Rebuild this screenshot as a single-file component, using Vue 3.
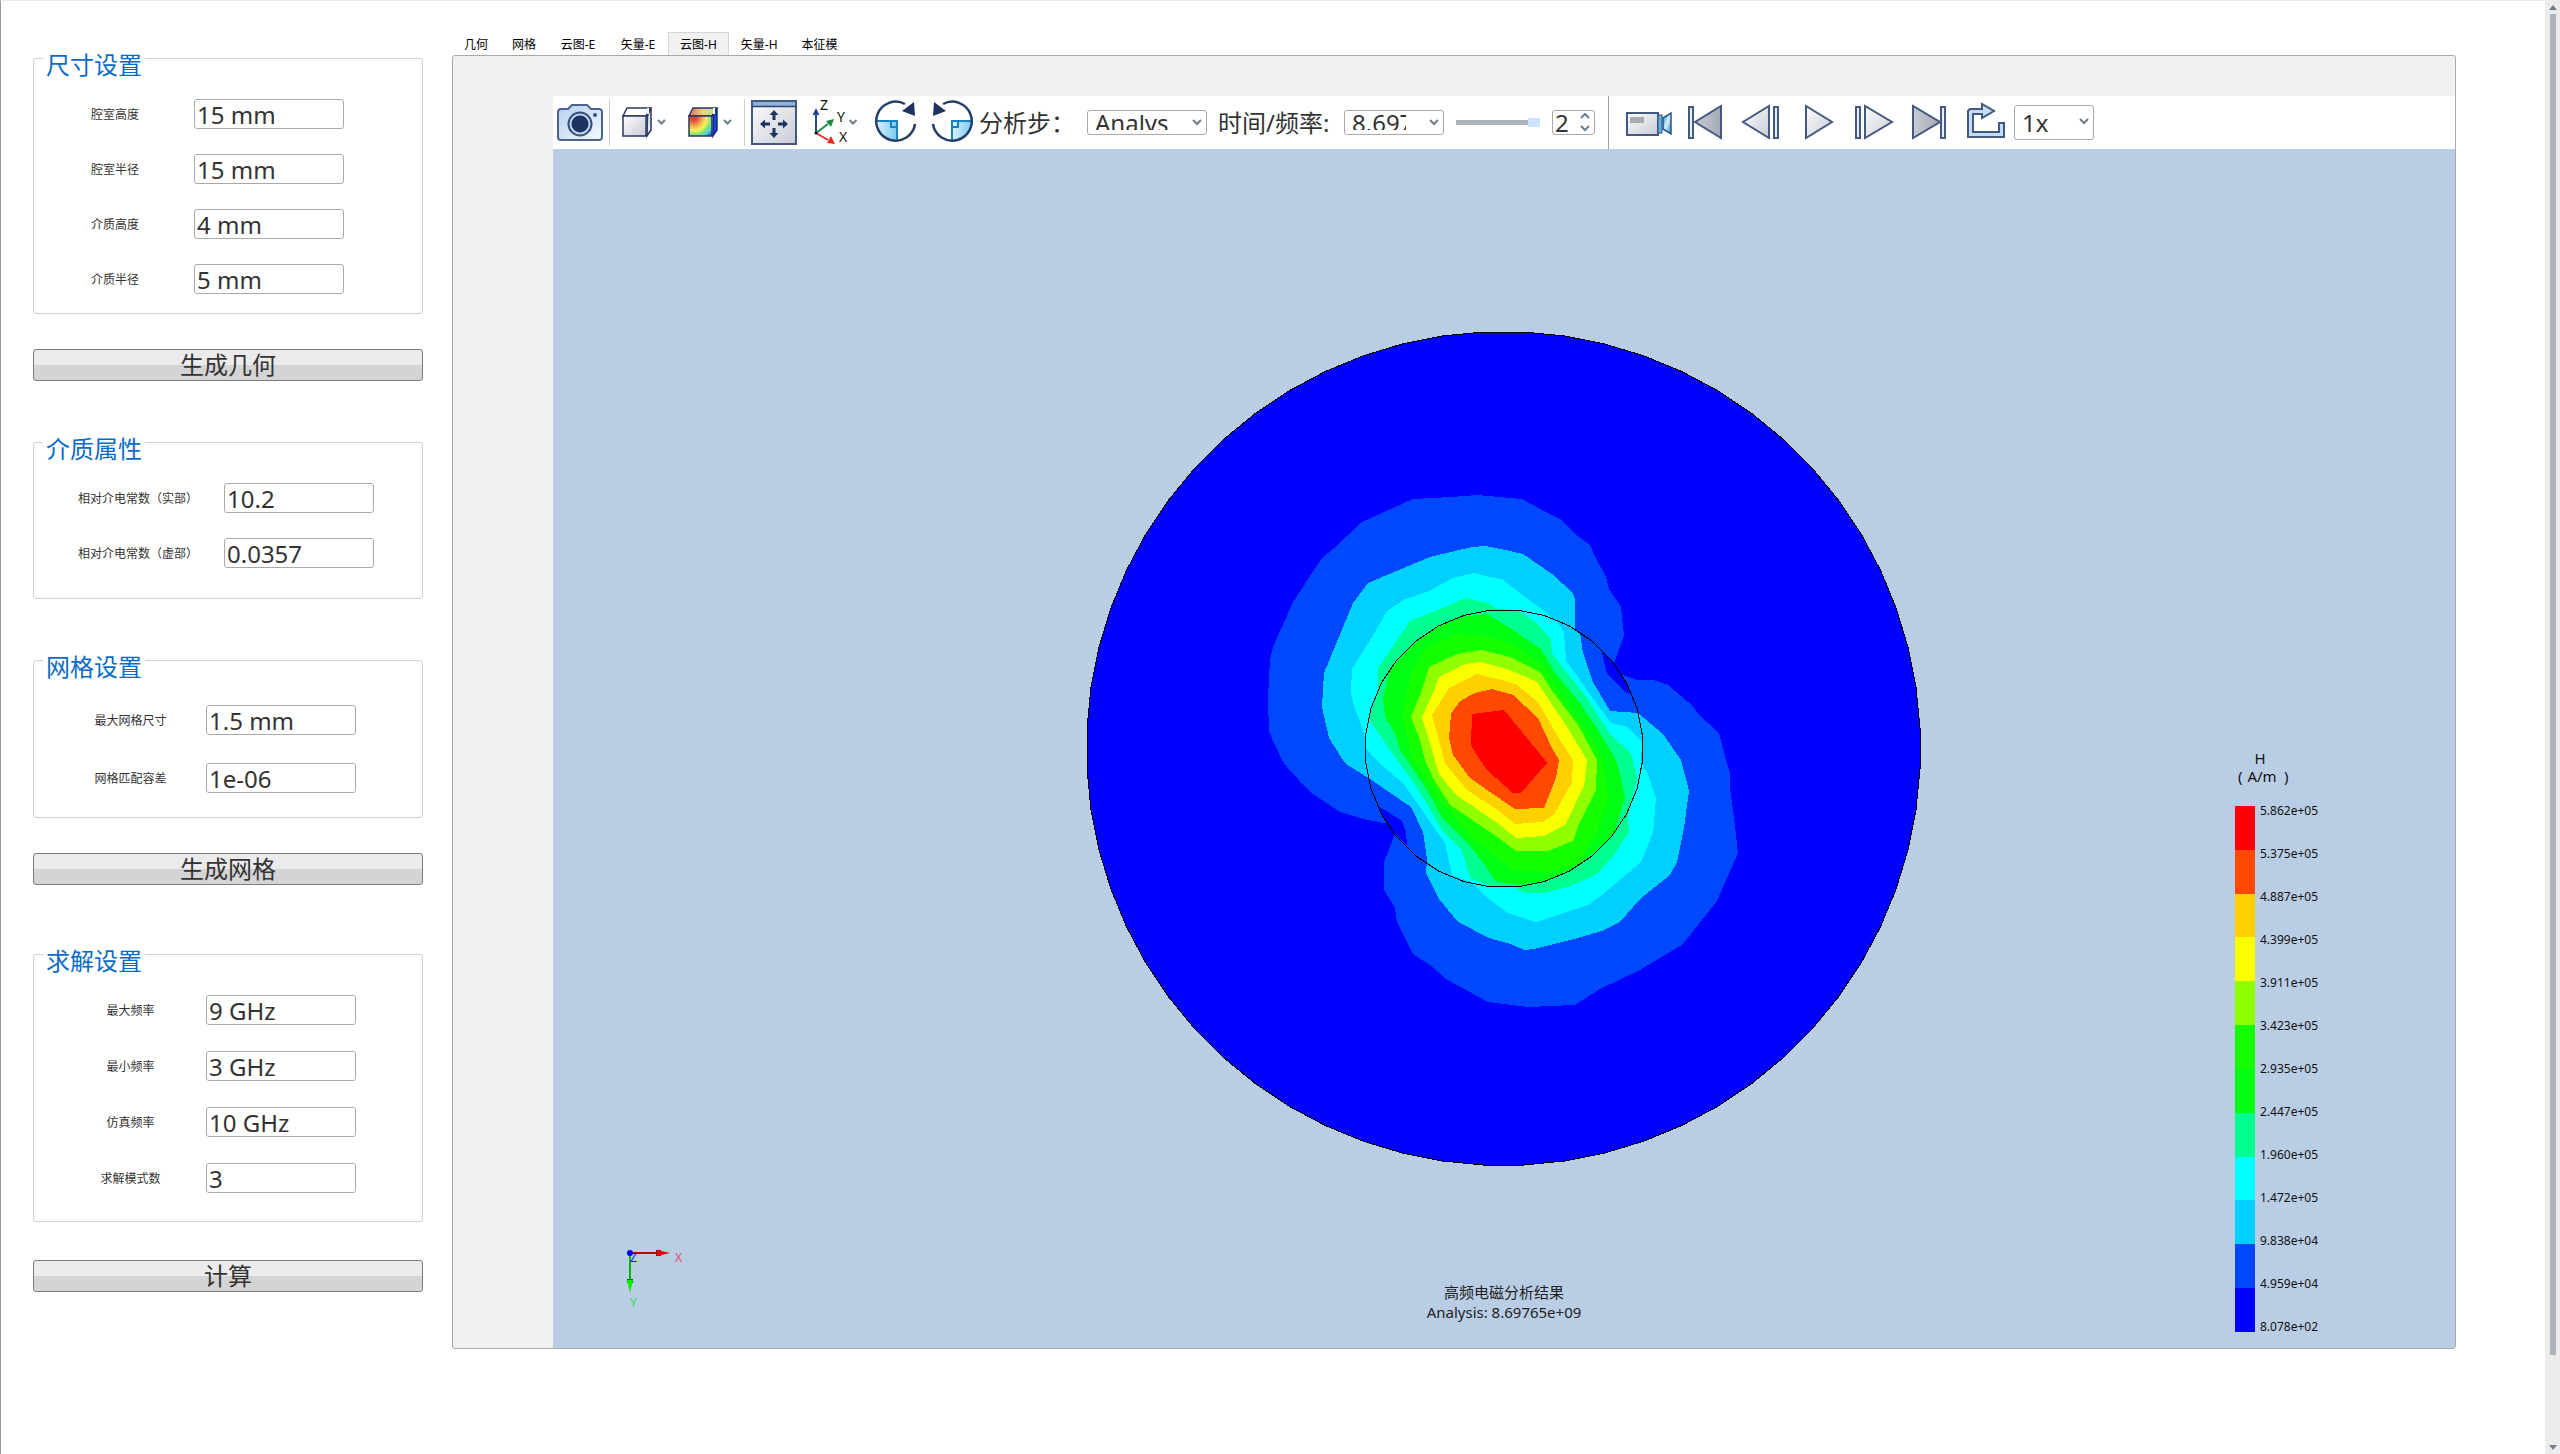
<script setup>
import { ref } from 'vue'

const groups = [
  {
    key: 'size',
    title: '尺寸设置',
    button: '生成几何',
    fields: [
      { label: '腔室高度', value: '15 mm' },
      { label: '腔室半径', value: '15 mm' },
      { label: '介质高度', value: '4 mm' },
      { label: '介质半径', value: '5 mm' },
    ],
  },
  {
    key: 'medium',
    title: '介质属性',
    fields: [
      { label: '相对介电常数（实部）', value: '10.2' },
      { label: '相对介电常数（虚部）', value: '0.0357' },
    ],
  },
  {
    key: 'mesh',
    title: '网格设置',
    button: '生成网格',
    fields: [
      { label: '最大网格尺寸', value: '1.5 mm' },
      { label: '网格匹配容差', value: '1e-06' },
    ],
  },
  {
    key: 'solve',
    title: '求解设置',
    button: '计算',
    fields: [
      { label: '最大频率', value: '9 GHz' },
      { label: '最小频率', value: '3 GHz' },
      { label: '仿真频率', value: '10 GHz' },
      { label: '求解模式数', value: '3' },
    ],
  },
]

const tabs = ['几何', '网格', '云图-E', '矢量-E', '云图-H', '矢量-H', '本征模']
const activeTab = ref('云图-H')

const ring = (cx, cy, r, n) =>
  Array.from({ length: n }, (_, i) => {
    const a = ((i + 0.5) * 2 * Math.PI) / n
    return `${(cx + r * Math.cos(a)).toFixed(1)},${(cy + r * Math.sin(a)).toFixed(1)}`
  }).join(' ')

const cavity = ring(1503.5, 748.5, 417, 64)
const dielectric = ring(1504, 748.5, 139, 32)

/* Iso-bands of |H|, weakest first */
const bands = [
  { color: '#0048ff', points: '1413,499 1452,497 1477,495 1510,498 1522,499 1544,511 1560,519 1575,534 1590,545 1596,558 1606,577 1609,589 1621,607 1624,636 1614,663 1601,649 1607,674 1627,693 1631,693 1622,675 1637,680 1653,680 1668,685 1694,707 1697,713 1719,733 1726,760 1730,773 1730,788 1734,817 1738,853 1717,901 1683,944 1640,970 1600,989 1575,1005 1528,1007 1488,1002 1446,979 1430,965 1413,954 1397,922 1395,908 1384,890 1384,862 1395,834 1407,846 1406,832 1402,821 1377,805 1388,824 1364,819 1340,812 1310,792 1287,767 1282,760 1269,732 1268,698 1270,660 1273,647 1293,602 1322,558 1333,549 1362,522' },
  { color: '#00d0ff', points: '1368,583 1430,557 1472,547 1485,546 1510,551 1523,554 1552,574 1573,593 1575,600 1575,629 1580,633 1583,653 1593,682 1610,711 1638,713 1663,734 1681,760 1689,791 1684,828 1677,862 1670,875 1640,899 1620,922 1602,931 1574,939 1534,949 1524,950 1511,944 1489,938 1458,922 1439,899 1426,873 1427,859 1423,832 1411,807 1370,779 1346,764 1343,760 1329,738 1322,707 1324,673 1353,603' },
  { color: '#00ffff', points: '1387,611 1405,599 1427,592 1453,578 1474,573 1503,580 1525,597 1543,610 1549,616 1557,622 1564,632 1566,661 1578,677 1592,697 1611,723 1628,727 1642,742 1641,763 1648,774 1656,799 1653,832 1641,862 1602,895 1588,905 1536,922 1508,913 1485,896 1473,883 1452,875 1445,843 1433,826 1404,784 1376,760 1366,748 1364,733 1353,703 1351,692 1352,669 1372,637' },
  { color: '#00ff90', points: '1410,621 1445,607 1465,598 1488,603 1497,609 1517,610 1537,623 1551,639 1552,653 1567,673 1587,698 1610,734 1631,753 1637,778 1628,815 1629,832 1614,855 1597,874 1571,886 1545,893 1525,893 1513,886 1488,885 1470,878 1462,851 1442,830 1416,786 1397,760 1368,718 1378,693 1378,668' },
  { color: '#00ff12', points: '1390,670 1410,647 1433,629 1460,617 1487,614 1510,628 1542,650 1553,670 1580,703 1600,733 1616,760 1620,774 1625,797 1614,834 1579,866 1545,882 1519,885 1496,882 1482,861 1468,843 1442,818 1427,790 1407,760 1400,750 1395,733 1385,717 1383,698' },
  { color: '#14ff00', points: '1412,670 1427,647 1457,634 1487,636 1510,643 1542,663 1567,703 1593,740 1603,760 1605,778 1608,797 1597,832 1577,864 1548,872 1513,870 1473,839 1439,799 1413,759 1401,717' },
  { color: '#90ff00', points: '1429,667 1457,654 1482,650 1510,657 1520,662 1540,672 1553,692 1578,725 1597,760 1596,790 1579,824 1573,841 1548,851 1516,851 1496,836 1450,805 1433,778 1425,760 1420,740 1411,717 1422,690' },
  { color: '#faff00', points: '1439,677 1465,664 1481,662 1510,670 1537,682 1567,727 1587,760 1584,786 1565,825 1544,836 1516,838 1496,822 1456,795 1439,774 1435,760 1422,717 1433,693' },
  { color: '#ffd000', points: '1449,688 1477,674 1510,682 1517,685 1538,702 1560,740 1573,760 1572,782 1554,815 1542,822 1515,824 1499,811 1467,790 1445,763 1432,715' },
  { color: '#ff4800', points: '1451,714 1460,701 1475,693 1492,689 1510,694 1513,695 1538,718 1552,748 1559,760 1556,778 1544,808 1515,809 1490,792 1470,778 1453,755 1449,738' },
  { color: '#ff0000', points: '1472,714 1504,710 1545,760 1547,763 1521,793 1513,793 1488,771 1480,760 1471,745' },
]

const scaleColors = ['#ff0000', '#ff4800', '#ffd000', '#faff00', '#90ff00', '#14ff00', '#00ff12', '#00ff90', '#00ffff', '#00d0ff', '#0048ff', '#0000ff']
const scaleLabels = ['5.862e+05', '5.375e+05', '4.887e+05', '4.399e+05', '3.911e+05', '3.423e+05', '2.935e+05', '2.447e+05', '1.960e+05', '1.472e+05', '9.838e+04', '4.959e+04', '8.078e+02']

const playback = [
  { name: '第一帧', bar: 10, tri: '43,10 43,42 17,26', fill: 'url(#steel)' },
  { name: '上一帧', bar: 39, tri: '35,10 35,42 9,26', fill: 'url(#silver)' },
  { name: '播放', bar: null, tri: '16,10 16,42 42,26', fill: 'url(#silver)' },
  { name: '下一帧', bar: 9, tri: '19,10 19,42 46,26', fill: 'url(#silver)' },
  { name: '最后一帧', bar: 38, tri: '11,10 11,42 38,26', fill: 'url(#steel)' },
]
</script>

<template>
  <div class="page">
    <aside class="sidebar">
      <section v-for="g in groups" :key="g.key" class="group" :class="g.key">
        <fieldset>
          <legend>{{ g.title }}</legend>
          <div v-for="(f, i) in g.fields" :key="f.label" class="field">
            <label :for="g.key + i">{{ f.label }}</label>
            <input :id="g.key + i" type="text" :value="f.value" />
          </div>
        </fieldset>
        <button v-if="g.button" type="button" class="action">{{ g.button }}</button>
      </section>
    </aside>

    <main class="main">
      <nav class="tabs">
        <button v-for="t in tabs" :key="t" type="button" :class="{ active: t === activeTab, wide: t.includes('-') }" @click="activeTab = t">{{ t }}</button>
      </nav>

      <div class="panel">
        <div class="toolbar">
          <button type="button" class="tool" aria-label="截图">
            <svg width="56" height="53" viewBox="0 0 56 53">
              <defs>
                <linearGradient id="silver" x1="0" y1="0" x2="1" y2="1"><stop offset="0" stop-color="#fdfdfe" /><stop offset="1" stop-color="#c9ccd6" /></linearGradient>
                <linearGradient id="steel" x1="0" y1="0" x2="1" y2="0"><stop offset="0" stop-color="#c8ccd4" /><stop offset="1" stop-color="#a3a9b5" /></linearGradient>
                <linearGradient id="body" x1="0" y1="0" x2="1" y2="1"><stop offset="0" stop-color="#b4d0ee" /><stop offset="1" stop-color="#f4f8fc" /></linearGradient>
                <linearGradient id="pie" x1="0" y1="0" x2="1" y2="0"><stop offset="0" stop-color="#d9f1fb" /><stop offset="1" stop-color="#79c9ef" /></linearGradient>
                <linearGradient id="lens" x1="0" y1="0" x2="1" y2="1"><stop offset="0" stop-color="#1883c4" /><stop offset="0.5" stop-color="#d9f1fb" /><stop offset="1" stop-color="#1883c4" /></linearGradient>
                <radialGradient id="heat" gradientUnits="userSpaceOnUse" cx="18" cy="22" r="24">
                  <stop offset="0.1" stop-color="#d9443c" /><stop offset="0.3" stop-color="#f0a04a" /><stop offset="0.52" stop-color="#f5f25a" /><stop offset="0.7" stop-color="#7fe07a" /><stop offset="0.85" stop-color="#48c8f0" /><stop offset="1" stop-color="#1747e0" />
                </radialGradient>
                <linearGradient id="heatTop" x1="0" y1="0" x2="1" y2="0"><stop offset="0" stop-color="#e06a50" /><stop offset="0.5" stop-color="#f4d08a" /><stop offset="1" stop-color="#9fe8a0" /></linearGradient>
              </defs>
              <path d="M8 13H15L19 9H34L38 13H46Q49 13 49 16V41Q49 44 46 44H8Q5 44 5 41V16Q5 13 8 13Z" fill="url(#body)" stroke="#4c6390" stroke-width="2" />
              <circle cx="27" cy="28" r="11.5" fill="#c3d3e8" stroke="#36507f" stroke-width="2" />
              <circle cx="27" cy="28" r="8.5" fill="#1d3461" />
              <circle cx="42" cy="19" r="2" fill="#36507f" />
            </svg>
          </button>
          <i class="sep short"></i>
          <button type="button" class="tool" aria-label="显示模式">
            <svg width="66" height="53" viewBox="0 0 66 53">
              <path d="M13 20L17 12H41L36 20Z" fill="#fff" stroke="#27395f" stroke-width="1.5" />
              <rect x="13" y="20" width="23" height="20" fill="url(#silver)" stroke="#27395f" stroke-width="1.5" />
              <path d="M37.500 20L41 12V34L37 40Z" fill="#e3e5ea" stroke="#27395f" stroke-width="1.500" />
              <path d="M38 12V18" stroke="#fff" stroke-width="2" />
              <path d="M48 24L51.500 27.500L55 24" fill="none" stroke="#6c7f8a" stroke-width="2" />
            </svg>
          </button>
          <button type="button" class="tool" aria-label="云图样式">
            <svg width="68" height="53" viewBox="0 0 68 53">
              <path d="M13 20L17 12H41L36 20Z" fill="url(#heatTop)" stroke="#27395f" stroke-width="1.5" />
              <rect x="13" y="20" width="23" height="20" fill="url(#heat)" stroke="#27395f" stroke-width="1.5" />
              <path d="M37.500 20L41 12V34L37 40Z" fill="#1747e0" stroke="#15307c" stroke-width="1.500" />
              <path d="M38 12V18" stroke="#fff" stroke-width="2" />
              <path d="M48 24L51.500 27.500L55 24" fill="none" stroke="#6c7f8a" stroke-width="2" />
            </svg>
          </button>
          <i class="sep short"></i>
          <button type="button" class="tool" aria-label="适应窗口">
            <svg width="58" height="53" viewBox="0 0 58 53">
              <rect x="7" y="5" width="44" height="43" fill="url(#silver)" stroke="#44597f" stroke-width="2" />
              <rect x="8" y="6" width="42" height="4" fill="#8fb0da" />
              <path d="M7 10.500H51" stroke="#2c4674" stroke-width="1.500" />
              <g fill="#1d3461">
                <path d="M29 14L33.500 19H30.500V24H27.500V19H24.500Z" />
                <path d="M29 42L33.500 37H30.500V32H27.500V37H24.500Z" />
                <path d="M15 28L20 23.500V26.500H25V29.500H20V32.500Z" />
                <path d="M43 28L38 23.500V26.500H33V29.500H38V32.500Z" />
              </g>
            </svg>
          </button>
          <button type="button" class="tool" aria-label="视图方向">
            <svg width="64" height="53" viewBox="0 0 64 53">
              <path d="M13 37V18" stroke="#24479b" stroke-width="2" />
              <path d="M13 12L16.500 19H9.500Z" fill="#24479b" />
              <path d="M13 37L25 28" stroke="#1b8a44" stroke-width="2" />
              <path d="M31 23L28 31L23 25Z" fill="#1b8a44" />
              <path d="M13 37L25 44" stroke="#ee2a24" stroke-width="2" />
              <path d="M32 48L28 40L24 47Z" fill="#ee2a24" />
              <circle cx="13" cy="37" r="1.500" fill="#111" />
              <text x="17" y="14" class="axis">Z</text>
              <text x="34" y="26" class="axis">Y</text>
              <text x="36" y="46" class="axis">X</text>
              <path d="M46.500 24L50 27.500L53.500 24" fill="none" stroke="#6c7f8a" stroke-width="2" />
            </svg>
          </button>
          <button type="button" class="tool" aria-label="顺时针旋转">
            <svg width="58" height="53" viewBox="0 0 58 53">
              <path d="M10 25H30V45A20 20 0 0 1 10 25Z" fill="url(#pie)" />
              <path d="M10 25H30V45M24 25V31H30" fill="none" stroke="#1883c4" stroke-width="2" />
              <path d="M48 28A19.500 19.500 0 1 1 38 8" fill="none" stroke="#253f6b" stroke-width="2.500" />
              <path d="M47 6L48 20L35 15Z" fill="#1d3461" />
            </svg>
          </button>
          <button type="button" class="tool" aria-label="逆时针旋转">
            <svg width="54" height="53" viewBox="0 0 54 53">
              <path d="M47 25H27V45A20 20 0 0 0 47 25Z" fill="url(#pie)" />
              <path d="M47 25H27V45M33 25V31H27" fill="none" stroke="#1883c4" stroke-width="2" />
              <path d="M8 28A19.500 19.500 0 1 0 18 8" fill="none" stroke="#253f6b" stroke-width="2.500" />
              <path d="M9 6L8 20L21 15Z" fill="#1d3461" />
            </svg>
          </button>
          <label for="step" class="step-label">分析步：</label>
          <span class="combo step">
            <span class="value"><select id="step"><option>Analysis</option></select></span>
            <svg width="10" height="7" viewBox="0 0 10 7"><path d="M1 1L5 5L9 1" /></svg>
          </span>
          <label for="freq" class="freq-label">时间/频率:</label>
          <span class="combo freq">
            <span class="value"><select id="freq"><option>8.69765e+09</option></select></span>
            <svg width="10" height="7" viewBox="0 0 10 7"><path d="M1 1L5 5L9 1" /></svg>
          </span>
          <input class="slider" type="range" min="0" max="2" value="2" aria-label="帧" />
          <span class="spin">
            <input type="text" value="2" aria-label="帧序号" />
            <svg width="10" height="19" viewBox="0 0 10 19"><path d="M1 5L5 1L9 5M1 13L5 17L9 13" /></svg>
          </span>
          <i class="sep"></i>
          <button type="button" class="tool" aria-label="录制动画">
            <svg width="56" height="53" viewBox="0 0 56 53">
              <rect x="5" y="17" width="31" height="22" fill="url(#silver)" stroke="#44597f" stroke-width="2" />
              <rect x="8" y="21" width="14" height="6" fill="#a9abb2" />
              <rect x="36" y="19" width="4" height="18" fill="#5fb4e0" stroke="#36507f" />
              <path d="M41 22L49 17V38L41 33Z" fill="url(#lens)" stroke="#2c5583" stroke-width="1.500" />
            </svg>
          </button>
          <button v-for="p in playback" :key="p.name" type="button" class="tool" :aria-label="p.name">
            <svg width="56" height="53" viewBox="0 0 56 53">
              <rect v-if="p.bar !== null" :x="p.bar + 1" y="11" width="4" height="31" fill="#e9edf4" stroke="#44597f" stroke-width="2" />
              <polygon :points="p.tri" :fill="p.fill" stroke="#44597f" stroke-width="2" />
            </svg>
          </button>
          <button type="button" class="tool" aria-label="循环播放">
            <svg width="56" height="53" viewBox="0 0 56 53">
              <path d="M24 13H12L10 15V41H46V27H41V36H15V18H24V22L36 15L24 8Z" fill="#c5dcf2" stroke="#44597f" stroke-width="2" />
            </svg>
          </button>
          <span class="combo speed">
            <span class="value"><select aria-label="播放速度"><option>1x</option></select></span>
            <svg width="10" height="7" viewBox="0 0 10 7"><path d="M1 1L5 5L9 1" /></svg>
          </span>
        </div>

        <svg class="view" viewBox="553 149 1902 1199">
          <g shape-rendering="crispEdges">
            <polygon :points="cavity" fill="#0000ff" />
            <polygon v-for="b in bands" :key="b.color" :points="b.points" :fill="b.color" />
            <polygon :points="cavity" class="edge" />
            <polygon :points="dielectric" class="edge" />
          </g>

          <text x="1504" y="1298" class="caption">高频电磁分析结果</text>
          <text x="1504" y="1318" class="caption">Analysis: 8.69765e+09</text>

          <text x="2260" y="764" class="unit">H</text>
          <text x="2238" y="782" class="unit-line">(</text>
          <text x="2262" y="782" class="unit">A/m</text>
          <text x="2284" y="782" class="unit-line">)</text>
          <g shape-rendering="crispEdges">
            <rect v-for="(c, i) in scaleColors" :key="c" x="2235" :y="806 + Math.round(i * 43.83)" width="20" height="44" :fill="c" />
          </g>
          <text v-for="(l, i) in scaleLabels" :key="l" x="2260" :y="815 + i * 43" class="tick">{{ l }}</text>

          <g>
            <path d="M630 1253H660" stroke="#c00000" stroke-width="2" />
            <path d="M656 1250H661V1256H656Z" fill="#900000" />
            <path d="M657 1250L670 1253L657 1256Z" fill="#f00000" />
            <path d="M630 1253V1282" stroke="#00b400" stroke-width="2" />
            <path d="M627 1279H633V1283H627Z" fill="#007000" />
            <path d="M627 1280H633L630 1293Z" fill="#00f000" />
            <circle cx="630" cy="1253" r="3" fill="#0000ff" />
            <text x="630" y="1262" class="triad" fill="#1010e0">Z</text>
            <text x="675" y="1262" class="triad" fill="#e05060">X</text>
            <text x="630" y="1307" class="triad" fill="#30e050">Y</text>
          </g>
        </svg>
      </div>
    </main>

    <div class="scrollbar">
      <svg width="8" height="5" viewBox="0 0 8 5"><path d="M0 5L4 0L8 5Z" fill="#6c7f8a" /></svg>
      <div class="track"><div class="thumb"></div></div>
      <svg width="8" height="5" viewBox="0 0 8 5"><path d="M0 0L4 5L8 0Z" fill="#6c7f8a" /></svg>
    </div>
  </div>
</template>

<style>
body {
  margin: 0;
  background: #fff;
}
</style>

<style scoped>
.page,
.page button,
.page input,
.page select {
  font-family: "Noto Sans", "Noto Sans CJK SC", sans-serif;
}
.page {
  box-sizing: border-box;
  display: flex;
  min-height: 100vh;
  border-left: 1px solid #999;
  border-top: 1px solid #ececec;
  color: #333;
}
button {
  padding: 0;
  border: 0;
  background: none;
  color: inherit;
}
svg {
  display: block;
}

/* Parameter groups */
.sidebar {
  flex: none;
  width: 390px;
  padding: 38px 29px 0 32px;
}
fieldset {
  margin: 0;
  min-width: 0;
  padding: 22px 0 19px;
  border: 1px solid #d0d0d0;
  border-radius: 3px;
  display: block;
}
legend {
  margin-left: 9px;
  padding: 14px 3px 0;
  font-size: 24px;
  line-height: 24px;
  color: #0a6cc8;
}
.field {
  display: flex;
  align-items: center;
  margin-bottom: 25px;
}
.field:last-child {
  margin-bottom: 0;
}
.field label {
  box-sizing: border-box;
  width: 160px;
  padding: 2px 0 0 2px;
  text-align: center;
  font-size: 12px;
  line-height: 16px;
  white-space: nowrap;
}
.field input {
  box-sizing: border-box;
  width: 150px;
  height: 30px;
  padding: 0 2px;
  border: 1px solid #a9a9a9;
  border-radius: 3px;
  background: #fff;
  font-size: 24px;
  line-height: 28px;
  color: #333;
}
.action {
  display: block;
  width: 100%;
  height: 32px;
  margin-top: 35px;
  border: 1px solid #7c7c7c;
  border-radius: 3px;
  background: linear-gradient(#ebebeb 50%, #d4d4d4 50%);
  font-size: 24px;
  line-height: 30px;
}
.medium {
  margin-top: 42px;
}
.medium fieldset {
  padding: 22px 0 30px;
}
.medium .field label {
  width: 190px;
  padding-left: 18px;
}
.mesh {
  margin-top: 42px;
}
.mesh fieldset {
  padding: 26px 0 24px;
}
.mesh .field {
  margin-bottom: 28px;
}
.mesh .field:last-child {
  margin-bottom: 0;
}
.mesh .field label,
.solve .field label {
  width: 172px;
  padding-left: 21px;
}
.solve {
  margin-top: 50px;
}
.solve fieldset {
  padding: 22px 0 28px;
}
.solve .field {
  margin-bottom: 26px;
}
.solve .field:last-child {
  margin-bottom: 0;
}
.solve .action {
  margin-top: 38px;
}

/* Result area */
.main {
  flex: 1;
  min-width: 0;
  padding: 31px 89px 0 0;
}
.tabs {
  display: flex;
  height: 23px;
}
.tabs button {
  padding: 1px 11px 0;
  border: 1px solid transparent;
  border-bottom: 0;
  font-size: 12px;
  line-height: 21px;
  color: #000;
}
.tabs .wide {
  min-width: 60px;
}
.tabs .active {
  border-color: #d6d6d6;
  background: #f1f1f1;
}
.panel {
  padding: 40px 0 0 100px;
  border: 1px solid #a8a8a8;
  border-radius: 3px;
  background: #f1f1f1;
}
.toolbar {
  display: flex;
  align-items: center;
  height: 53px;
  background: #fff;
  font-size: 24px;
  line-height: 32px;
  white-space: nowrap;
}
.tool {
  flex: none;
}
.sep {
  flex: none;
  width: 1px;
  height: 53px;
  background: #a0a0a0;
}
.sep.short {
  height: 47px;
  background: #cfcfcf;
}
.axis {
  font-size: 14px;
  fill: #111;
}
.step-label {
  width: 108px;
}
.freq-label {
  width: 126px;
  margin-left: 11px;
}

/* The value window is lower than its text, so the glyphs are cut */
.combo {
  position: relative;
  box-sizing: border-box;
  flex: none;
  display: flex;
  align-items: center;
  height: 25px;
  padding: 0 4px;
  border: 1px solid #a9a9a9;
  border-radius: 3px;
}
.value {
  flex: 1;
  min-width: 0;
  display: flex;
  align-items: center;
  height: 15px;
  overflow: hidden;
}
.combo select {
  box-sizing: border-box;
  flex: none;
  width: 100%;
  height: 33px;
  padding: 0 33px 0 3px;
  border: 0;
  appearance: none;
  background: transparent;
  font-size: 24px;
  color: #333;
}
.combo svg {
  position: absolute;
  right: 4px;
  top: 8px;
  pointer-events: none;
}
.combo path,
.spin path {
  fill: none;
  stroke: #6c7f8a;
  stroke-width: 2;
}
.step {
  width: 120px;
}
.freq {
  width: 100px;
}
.combo.speed {
  width: 80px;
  height: 35px;
}
.speed .value {
  height: 33px;
}
.speed select {
  padding-right: 16px;
}
.speed svg {
  top: 12px;
}
.slider {
  width: 84px;
  height: 25px;
  margin: 0 12px;
  appearance: none;
  background: linear-gradient(#adb3b8, #adb3b8) center / 100% 5px no-repeat;
}
.slider::-webkit-slider-thumb {
  appearance: none;
  width: 12px;
  height: 9px;
  background: #cce4ff;
}
.spin {
  position: relative;
  width: 43px;
  height: 25px;
}
.spin input {
  box-sizing: border-box;
  display: block;
  width: 100%;
  height: 25px;
  padding: 0 18px 0 2px;
  border: 1px solid #a9a9a9;
  border-radius: 3px;
  font-size: 24px;
  color: #333;
}
.spin svg {
  position: absolute;
  right: 5px;
  top: 3px;
}
.spin + .sep {
  margin: 0 13px;
}
.view {
  width: 100%;
  height: auto;
  background: #b9cde5;
}
.edge {
  fill: none;
  stroke: #000;
  stroke-width: 1;
}
.caption {
  font-size: 15px;
  text-anchor: middle;
  fill: #222;
}
.unit,
.unit-line {
  font-size: 15px;
  fill: #111;
}
.unit {
  text-anchor: middle;
}
.tick {
  font-size: 12px;
  fill: #111;
}
.triad {
  font-size: 12px;
}

/* Page scrollbar */
.scrollbar {
  flex: none;
  display: flex;
  flex-direction: column;
  align-items: center;
  gap: 4px;
  width: 15px;
  padding: 4px 0;
  background: #ececec;
}
.track {
  flex: 1;
  width: 6px;
}
.thumb {
  height: 94%;
  background: #adb3b8;
}
</style>
